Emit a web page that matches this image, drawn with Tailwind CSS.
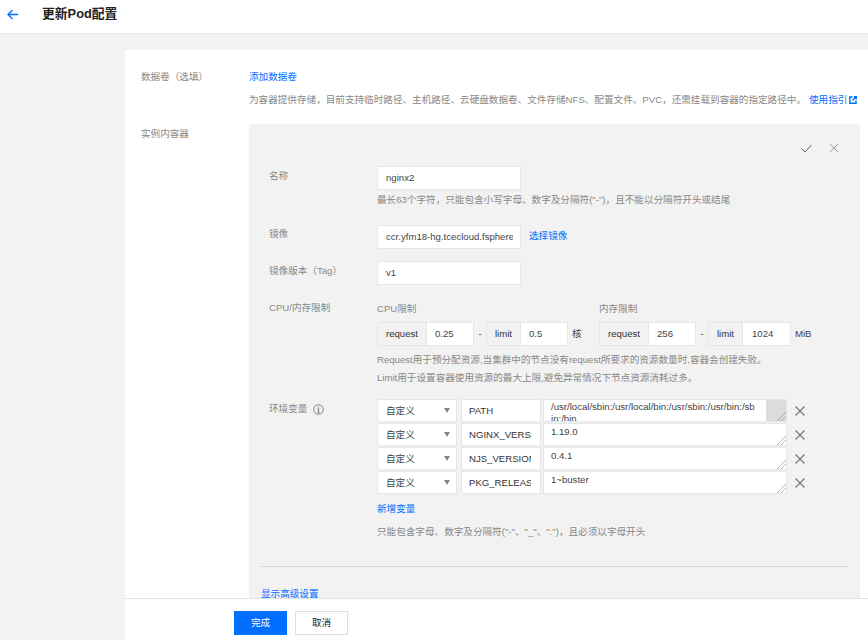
<!DOCTYPE html>
<html lang="zh-CN">
<head>
<meta charset="utf-8">
<script src="https://cdn.jsdelivr.net/npm/@tailwindcss/browser@4"></script>
<title>更新Pod配置</title>
</head>
<body class="m-0 bg-[#f2f2f2]">
<div class="relative w-[868px] h-[640px] overflow-hidden bg-[#f2f2f2] font-['Liberation_Sans','Noto_Sans_CJK_SC',sans-serif] text-[9.6px] leading-[14px] text-[#888]">
  <header class="h-[34px] bg-white border-b border-[#e6e6e6] flex items-center pb-[5px]">
    <svg class="ml-[7px] w-[11px] h-[11px] text-[#006eff]" viewBox="0 0 11 11" fill="none" stroke="currentColor" stroke-width="1.3"><path d="M11 5.5H1M5.5 1 1 5.5 5.5 10"/></svg>
    <h1 class="ml-[24px] text-[12.8px] font-bold text-[#222] leading-[16px]">更新Pod配置</h1>
  </header>
  <main class="ml-[125px] mt-[16px] bg-white pt-[20px] pl-[16px] pr-[8px] h-[600px]">
    <section class="flex">
      <div class="w-[108px]">数据卷（选填）</div>
      <div class="flex-1 min-w-0">
        <a class="block text-[#006eff]">添加数据卷</a>
        <p class="mt-[9px] whitespace-nowrap flex items-center">为容器提供存储，目前支持临时路径、主机路径、云硬盘数据卷、文件存储NFS、配置文件、PVC，还需挂载到容器的指定路径中。
          <a class="ml-[3px] text-[#006eff]">使用指引</a>
          <svg class="ml-[2px] w-[8px] h-[8px] text-[#006eff]" viewBox="0 0 8 8" fill="none" stroke="currentColor" stroke-width="1.4"><path d="M3.5 1H.8v6.2H7V4.5"/><path d="M3.5 4.5 7.2.8M4.8.7h2.5v2.5"/></svg>
        </p>
      </div>
    </section>
    <section class="flex mt-[17px]">
      <div class="w-[108px] pt-[3px]">实例内容器</div>
      <div class="w-[611px] bg-[#f2f2f2] pl-[20px] pr-[12px] h-[480px]">
        <div class="flex justify-end gap-[17px] pt-[19px] pr-[9px] h-[42px]">
          <svg class="w-[11px] h-[11px] text-[#555]" viewBox="0 0 11 11" fill="none" stroke="currentColor" stroke-width="0.9"><path d="M.5 5.5 4 9 10.5 2"/></svg>
          <svg class="w-[10px] h-[10px] text-[#888]" viewBox="0 0 10 10" fill="none" stroke="currentColor" stroke-width="0.8"><path d="M1 1l8 8M9 1 1 9"/></svg>
        </div>

        <div class="flex">
          <div class="w-[108px] pt-[3px]">名称</div>
          <div>
            <div class="w-[144px] h-[24px] bg-white border border-[#e6e6e6] px-[8px] leading-[21px] text-[#444]">nginx2</div>
            <p class="mt-[3px]">最长63个字符，只能包含小写字母、数字及分隔符("-")，且不能以分隔符开头或结尾</p>
          </div>
        </div>

        <div class="flex mt-[18px]">
          <div class="w-[108px] pt-[2px]">镜像</div>
          <div class="w-[144px] h-[24px] bg-white border border-[#e6e6e6] pl-[8px] pr-[7px] leading-[22px] text-[#444] overflow-hidden whitespace-nowrap"><span class="block overflow-hidden">ccr.yfm18-hg.tcecloud.fsphere</span></div>
          <a class="ml-[8px] leading-[22px] text-[#006eff]">选择镜像</a>
        </div>

        <div class="flex mt-[12px]">
          <div class="w-[108px] pt-[3px]">镜像版本（Tag）</div>
          <div class="w-[144px] h-[24px] bg-white border border-[#e6e6e6] px-[8px] leading-[22px] text-[#444]">v1</div>
        </div>

        <div class="flex mt-[16px]">
          <div class="w-[108px]">CPU/内存限制</div>
          <div>
            <div class="flex mt-[1px]">
              <div class="w-[222px]">
                <div>CPU限制</div>
                <div class="flex items-center mt-[6px]">
                  <div class="flex h-[24px] border border-[#e6e6e6] leading-[22px]">
                    <span class="w-[49px] text-center bg-[#f2f2f2] text-[#333] border-r border-[#e6e6e6]">request</span>
                    <span class="w-[46px] bg-white px-[8px] text-[#444]">0.25</span>
                  </div>
                  <span class="w-[12px] text-center text-[#444]">-</span>
                  <div class="flex h-[24px] border border-[#e6e6e6] leading-[22px]">
                    <span class="w-[34px] text-center bg-[#f2f2f2] text-[#333] border-r border-[#e6e6e6]">limit</span>
                    <span class="w-[46px] bg-white px-[8px] text-[#444]">0.5</span>
                  </div>
                  <span class="ml-[4px] text-[#444]">核</span>
                </div>
              </div>
              <div>
                <div>内存限制</div>
                <div class="flex items-center mt-[6px]">
                  <div class="flex h-[24px] border border-[#e6e6e6] leading-[22px]">
                    <span class="w-[49px] text-center bg-[#f2f2f2] text-[#333] border-r border-[#e6e6e6]">request</span>
                    <span class="w-[46px] bg-white px-[8px] text-[#444]">256</span>
                  </div>
                  <span class="w-[12px] text-center text-[#444]">-</span>
                  <div class="flex h-[24px] border border-[#e6e6e6] leading-[22px]">
                    <span class="w-[34px] text-center bg-[#f2f2f2] text-[#333] border-r border-[#e6e6e6]">limit</span>
                    <span class="w-[47px] bg-white px-[9px] text-[#444]">1024</span>
                  </div>
                  <span class="ml-[4px] text-[#444]">MiB</span>
                </div>
              </div>
            </div>
            <p class="mt-[5px] leading-[18px] whitespace-nowrap">Request用于预分配资源,当集群中的节点没有request所要求的资源数量时,容器会创建失败。<br>Limit用于设置容器使用资源的最大上限,避免异常情况下节点资源消耗过多。</p>
          </div>
        </div>

        <div class="flex mt-[12px]">
          <div class="w-[108px] flex items-start gap-[6px] pt-[3px]">环境变量
            <svg class="w-[11px] h-[11px] mt-[1.5px] text-[#777]" viewBox="0 0 11 11" fill="none" stroke="currentColor"><circle cx="5.5" cy="5.5" r="4.8" stroke-width="0.9"/><path d="M5.5 4.6v3.6M4.4 8.3h2.2M4.6 4.6h1" stroke-width="1"/><path d="M5 2.6h1v1H5z" fill="currentColor" stroke="none"/></svg>
          </div>
          <div>
            <div class="flex flex-col gap-px">
              <div class="flex h-[23px] text-[#444]">
                <div class="w-[80px] bg-white border border-[#e6e6e6] pl-[8px] leading-[21px] flex justify-between items-center pr-[6px]">自定义<span class="w-0 h-0 border-x-[3.5px] border-t-[5px] border-x-transparent border-t-[#888]"></span></div>
                <div class="ml-[4px] w-[80px] bg-white border border-[#e6e6e6] pl-[7px] pr-[9px] leading-[21px] overflow-hidden whitespace-nowrap text-[#333]"><span class="block overflow-hidden">PATH</span></div>
                <div class="relative ml-[2px] w-[244px] bg-white border border-[#e6e6e6] overflow-hidden flex">
                  <div class="flex-1 pl-[7px] pr-[10px] pt-[1px] leading-[12px] break-all">/usr/local/sbin:/usr/local/bin:/usr/sbin:/usr/bin:/sbin:/bin</div>
                  <div class="w-[20px] bg-[#dcdcdc]"></div>
                  <svg class="absolute right-0 bottom-0 w-[10px] h-[10px] text-[#888]" viewBox="0 0 10 10" stroke="currentColor" stroke-width="0.6"><path d="M1 10 10 1M5 10 10 5"/></svg>
                </div>
                <svg class="ml-[8px] mt-[7px] w-[10px] h-[10px] text-[#777]" viewBox="0 0 10 10" fill="none" stroke="currentColor" stroke-width="1.2"><path d="M.5.5l9 9M9.5.5l-9 9"/></svg>
              </div>
              <div class="flex h-[23px] text-[#444]">
                <div class="w-[80px] bg-white border border-[#e6e6e6] pl-[8px] leading-[21px] flex justify-between items-center pr-[6px]">自定义<span class="w-0 h-0 border-x-[3.5px] border-t-[5px] border-x-transparent border-t-[#888]"></span></div>
                <div class="ml-[4px] w-[80px] bg-white border border-[#e6e6e6] pl-[7px] pr-[9px] leading-[21px] overflow-hidden whitespace-nowrap text-[#333]"><span class="block overflow-hidden">NGINX_VERSION</span></div>
                <div class="relative ml-[2px] w-[244px] bg-white border border-[#e6e6e6] pl-[7px] pt-[1px] leading-[13px]">1.19.0
                  <svg class="absolute right-0 bottom-0 w-[10px] h-[10px] text-[#888]" viewBox="0 0 10 10" stroke="currentColor" stroke-width="0.6"><path d="M1 10 10 1M5 10 10 5"/></svg>
                </div>
                <svg class="ml-[8px] mt-[7px] w-[10px] h-[10px] text-[#777]" viewBox="0 0 10 10" fill="none" stroke="currentColor" stroke-width="1.2"><path d="M.5.5l9 9M9.5.5l-9 9"/></svg>
              </div>
              <div class="flex h-[23px] text-[#444]">
                <div class="w-[80px] bg-white border border-[#e6e6e6] pl-[8px] leading-[21px] flex justify-between items-center pr-[6px]">自定义<span class="w-0 h-0 border-x-[3.5px] border-t-[5px] border-x-transparent border-t-[#888]"></span></div>
                <div class="ml-[4px] w-[80px] bg-white border border-[#e6e6e6] pl-[7px] pr-[9px] leading-[21px] overflow-hidden whitespace-nowrap text-[#333]"><span class="block overflow-hidden">NJS_VERSION</span></div>
                <div class="relative ml-[2px] w-[244px] bg-white border border-[#e6e6e6] pl-[7px] pt-[1px] leading-[13px]">0.4.1
                  <svg class="absolute right-0 bottom-0 w-[10px] h-[10px] text-[#888]" viewBox="0 0 10 10" stroke="currentColor" stroke-width="0.6"><path d="M1 10 10 1M5 10 10 5"/></svg>
                </div>
                <svg class="ml-[8px] mt-[7px] w-[10px] h-[10px] text-[#777]" viewBox="0 0 10 10" fill="none" stroke="currentColor" stroke-width="1.2"><path d="M.5.5l9 9M9.5.5l-9 9"/></svg>
              </div>
              <div class="flex h-[23px] text-[#444]">
                <div class="w-[80px] bg-white border border-[#e6e6e6] pl-[8px] leading-[21px] flex justify-between items-center pr-[6px]">自定义<span class="w-0 h-0 border-x-[3.5px] border-t-[5px] border-x-transparent border-t-[#888]"></span></div>
                <div class="ml-[4px] w-[80px] bg-white border border-[#e6e6e6] pl-[7px] pr-[9px] leading-[21px] overflow-hidden whitespace-nowrap text-[#333]"><span class="block overflow-hidden">PKG_RELEASE</span></div>
                <div class="relative ml-[2px] w-[244px] bg-white border border-[#e6e6e6] pl-[7px] pt-[1px] leading-[13px]">1~buster
                  <svg class="absolute right-0 bottom-0 w-[10px] h-[10px] text-[#888]" viewBox="0 0 10 10" stroke="currentColor" stroke-width="0.6"><path d="M1 10 10 1M5 10 10 5"/></svg>
                </div>
                <svg class="ml-[8px] mt-[7px] w-[10px] h-[10px] text-[#777]" viewBox="0 0 10 10" fill="none" stroke="currentColor" stroke-width="1.2"><path d="M.5.5l9 9M9.5.5l-9 9"/></svg>
              </div>
            </div>
            <a class="block mt-[8px] text-[#006eff]">新增变量</a>
            <p class="mt-[9px]">只能包含字母、数字及分隔符("-"、"_"、".")，且必须以字母开头</p>
          </div>
        </div>

        <hr class="mt-[27px] -ml-[8px] border-t border-[#d4d4d4]">
        <a class="block mt-[20px] -ml-[8px] text-[#006eff]">显示高级设置</a>
      </div>
    </section>
  </main>
  <footer class="absolute left-[125px] right-0 bottom-0 h-[42px] bg-white border-t border-[#dfe3e6] flex items-start pt-[12px] pl-[109px] gap-[8px]">
    <button class="w-[53px] h-[24px] bg-[#006eff] text-white text-[9.6px]">完成</button>
    <button class="w-[53px] h-[24px] bg-white border border-[#ddd] text-[#222] text-[9.6px]">取消</button>
  </footer>
</div>
</body>
</html>
